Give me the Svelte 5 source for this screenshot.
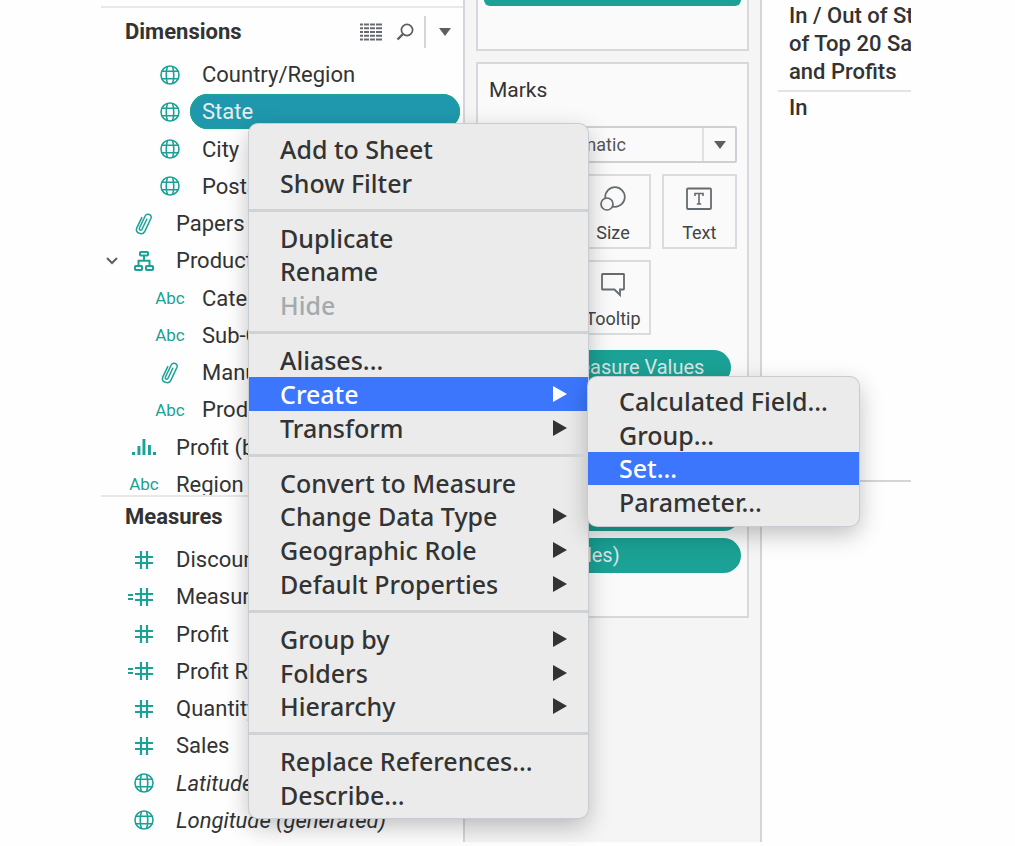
<script>
  const dimensions = [
    { icon: 'globe', label: 'Country/Region', nested: true },
    { icon: 'globe', label: 'State', nested: true, selected: true },
    { icon: 'globe', label: 'City', nested: true },
    { icon: 'globe', label: 'Postal Code', nested: true },
    { icon: 'clip', label: 'Papers' },
    { icon: 'tree', label: 'Product', open: true },
    { icon: 'abc', label: 'Category', nested: true },
    { icon: 'abc', label: 'Sub-Category', nested: true },
    { icon: 'clip', label: 'Manufacturer', nested: true },
    { icon: 'abc', label: 'Product Name', nested: true },
    { icon: 'bars', label: 'Profit (bin)' },
    { icon: 'abc', label: 'Region' }
  ];
  const measures = [
    { icon: 'hash', label: 'Discount' },
    { icon: 'calc', label: 'Measure Count' },
    { icon: 'hash', label: 'Profit' },
    { icon: 'calc', label: 'Profit Ratio' },
    { icon: 'hash', label: 'Quantity' },
    { icon: 'hash', label: 'Sales' },
    { icon: 'globe', label: 'Latitude (generated)', generated: true },
    { icon: 'globe', label: 'Longitude (generated)', generated: true }
  ];
  const createItems = ['Calculated Field...', 'Group...', 'Set...', 'Parameter...'];
  const menu = [
    { label: 'Add to Sheet' },
    { label: 'Show Filter' },
    null,
    { label: 'Duplicate' },
    { label: 'Rename' },
    { label: 'Hide', disabled: true },
    null,
    { label: 'Aliases...' },
    { label: 'Create', more: true, children: createItems },
    { label: 'Transform', more: true },
    null,
    { label: 'Convert to Measure' },
    { label: 'Change Data Type', more: true },
    { label: 'Geographic Role', more: true },
    { label: 'Default Properties', more: true },
    null,
    { label: 'Group by', more: true },
    { label: 'Folders', more: true },
    { label: 'Hierarchy', more: true },
    null,
    { label: 'Replace References...' },
    { label: 'Describe...' }
  ];
  let active = $state('Create');
  let activeChild = $state('Set...');
</script>

{#snippet fieldIcon(name)}
  {#if name === 'globe'}
    <svg width="20" height="20" viewBox="0 0 20 20" fill="none" stroke="currentColor" stroke-width="1.6">
      <circle cx="10" cy="10" r="9" />
      <path d="M7.500 1.500C5.800 6 5.800 14 7.500 18.500M12.500 1.500c1.700 4.500 1.700 12.500 0 17M1.600 6.300h16.800M1.600 13.700h16.800" />
    </svg>
  {:else if name === 'clip'}
    <svg width="20" height="24" viewBox="0 0 20 24" fill="none" stroke="currentColor" stroke-width="1.500" stroke-linecap="round">
      <path d="M12.8 7.2 8 17.2c-.9 1.8-3.4.8-2.6-1.2L11.200 4c1.500-3.100 7.300-1.500 5.800 2.300L10.800 19.400c-2 4.300-10 1.800-8.200-3L7.800 5.600" />
    </svg>
  {:else if name === 'tree'}
    <svg width="20" height="20" viewBox="0 0 20 20" fill="none" stroke="currentColor" stroke-width="2">
      <rect x="6" y="1" width="8" height="3.600" rx=".8" />
      <rect x="1" y="15" width="7" height="4" rx=".8" />
      <rect x="12" y="15" width="7" height="4" rx=".8" />
      <path d="M10 5v4.500M4.500 15V9.800h11V15" />
    </svg>
  {:else if name === 'bars'}
    <svg width="26" height="18" viewBox="0 0 26 18" fill="currentColor">
      <path d="M1 14h3v3H1zM6.500 8h2.900v9H6.500zM11.500 1h2.900v16h-2.900zM17 7h2.900v10H17zM22 14h3v3h-3z" />
    </svg>
  {:else if name === 'hash'}
    <svg width="34" height="20" viewBox="0 0 34 20" fill="none" stroke="currentColor" stroke-width="2.200">
      <path d="M14 1v18M20 1v18M8 7h18M8 13h18" />
    </svg>
  {:else if name === 'calc'}
    <svg width="34" height="20" viewBox="0 0 34 20" fill="none" stroke="currentColor" stroke-width="2.200">
      <path d="M14 1v18M20 1v18M8 7h18M8 13h18M1 8h5M1 12h5" />
    </svg>
  {:else}
    <span class="abc">Abc</span>
  {/if}
{/snippet}

{#snippet field(f)}
  <li class="field" class:nested={f.nested} class:selected={f.selected} class:generated={f.generated}>
    {#if f.open}
      <svg class="chevron" width="12" height="8" viewBox="0 0 12 8" fill="none" stroke="#5b6066" stroke-width="2"><path d="M1 1l5 5 5-5" /></svg>
    {/if}
    <span class="icon">{@render fieldIcon(f.icon)}</span>
    <button class="name">{f.label}</button>
  </li>
{/snippet}

{#snippet down()}
  <svg width="14" height="8" viewBox="0 0 14 8" fill="#5b5f63"><path d="M1 0h12L7 8z" /></svg>
{/snippet}

<main class="workspace">
  <aside class="data">
    <section class="dimensions">
      <header>
        <h2>Dimensions</h2>
        <button class="tool" aria-label="View data">
          <svg width="24" height="18" viewBox="0 0 24 18" stroke="#666a6e" stroke-width="2" fill="none">
            <path d="M1 1.500h3M5 1.500h5M11 1.500h5M17 1.500h6M1 5.250h3M5 5.250h5M11 5.250h5M17 5.250h6M1 9h3M5 9h5M11 9h5M17 9h6M1 12.750h3M5 12.750h5M11 12.750h5M17 12.750h6M1 16.500h3M5 16.500h5M11 16.500h5M17 16.500h6" />
          </svg>
        </button>
        <button class="tool" aria-label="Find field">
          <svg width="18" height="18" viewBox="0 0 18 18" stroke="#5b5f63" fill="none">
            <circle cx="11" cy="7" r="5.600" stroke-width="1.700" /><path d="M7 11l-5.500 5.500" stroke-width="2.400" />
          </svg>
        </button>
        <button class="tool split" aria-label="Options">{@render down()}</button>
      </header>
      <ul class="fields">
        {#each dimensions as f}{@render field(f)}{/each}
      </ul>
    </section>
    <section class="measures">
      <header><h2>Measures</h2></header>
      <ul class="fields">
        {#each measures as f}{@render field(f)}{/each}
      </ul>
    </section>
  </aside>

  <section class="shelves">
    <div class="card filters"><span class="pill"></span></div>
    <div class="card marks">
      <h3>Marks</h3>
      <button class="type"><span>Automatic</span><i>{@render down()}</i></button>
      <div class="channels">
        <button class="size">
          <svg width="26" height="26" viewBox="0 0 26 26" fill="#fafafa" stroke="#666b70" stroke-width="1.700">
            <circle cx="15" cy="11" r="9.800" /><circle cx="7" cy="18" r="6" />
          </svg>
          Size
        </button>
        <button>
          <svg width="26" height="26" viewBox="0 0 26 26" fill="none" stroke="#666b70" stroke-width="1.800">
            <rect x="1" y="2.500" width="24" height="20.500" rx="1" />
            <path d="M9 10V7.500h8V10M13 7.500V18M10.800 18h4.400" stroke-width="1.600" />
          </svg>
          Text
        </button>
        <button class="tip">
          <svg width="26" height="26" viewBox="0 0 26 26" fill="none" stroke="#666b70" stroke-width="1.800">
            <path d="M2.500 2h21q.5 0 .5.500v14.500q0 .5-.5.500H20v5.500L14.500 17.500h-12q-.5 0-.5-.5V2.500q0-.5.5-.5z" />
          </svg>
          Tooltip
        </button>
      </div>
      <div class="pill values">Measure Values</div>
      <div class="pills">
        <div class="pill"></div>
        <div class="pill">SUM(Sales)</div>
      </div>
    </div>
  </section>

  <section class="view">
    <h3>In / Out of States<br />of Top 20 Sales<br />and Profits</h3>
    <p>In</p>
  </section>

  <ul class="menu main">
    {#each menu as m}
      {#if m}
        <li class:active={m.label === active}>
          <button disabled={m.disabled} onmouseenter={() => (active = m.label)}>
            {m.label}
            {#if m.more}<svg width="14" height="16" viewBox="0 0 14 16" fill="currentColor"><path d="M0 0l14 8-14 8z" /></svg>{/if}
          </button>
          {#if m.children && m.label === active}
            <ul class="menu sub">
              {#each m.children as c}
                <li class:active={c === activeChild}><button onmouseenter={() => (activeChild = c)}>{c}</button></li>
              {/each}
            </ul>
          {/if}
        </li>
      {:else}
        <li class="rule" role="separator"></li>
      {/if}
    {/each}
  </ul>
</main>

<style>
  :global(body) {
    margin: 0;
    background: #fefefe;
    font-family: Roboto, 'Liberation Sans', sans-serif;
    color: #333;
  }
  ul { list-style: none; margin: 0; padding: 0; }
  h2, h3, p { margin: 0; }
  button { font: inherit; color: inherit; background: none; border: 0; padding: 0; }
  svg { display: block; flex: none; }

  .workspace {
    position: relative;
    display: grid;
    grid-template-columns: 364px 297px 1fr;
    margin: 0 104px 4px 101px;
  }

  .data { border-right: 2px solid #d3d6d9; padding-top: 6px; }
  .dimensions { height: 487px; overflow: hidden; border-top: 2px solid #e8e8e8; }
  .measures { border-top: 2px solid #e8e8e8; padding-bottom: 3px; }
  header { display: flex; align-items: center; height: 48px; padding: 0 11px 0 24px; }
  .measures header { height: 40px; padding-bottom: 4px; }
  h2 { flex: 1; font-size: 22px; line-height: 28px; font-weight: 700; }
  .tool { display: flex; align-items: center; height: 32px; margin-left: 13px; }
  .split { border-left: 2px solid #d3d6d9; padding-left: 12px; margin-left: 10px; }

  .fields { display: grid; grid-auto-rows: 1fr; height: 447px; }
  .measures .fields { height: 298px; }
  .field { position: relative; display: flex; align-items: center; padding-left: 23px; font-size: 22px; white-space: nowrap; }
  .nested { padding-left: 49px; }
  .icon { display: flex; justify-content: center; width: 40px; color: #1ba195; }
  .abc { font-size: 17px; }
  .name { flex: 1; margin-left: 3px; padding: 0 9px; line-height: 35px; text-align: left; }
  .nested .name { margin-left: 0; padding-left: 12px; margin-right: 3px; }
  .selected .name { background: #1f98ae; box-shadow: inset 0 0 0 2px #1ba195; color: #e8eef0; border-radius: 18px; }
  .generated .name { font-style: italic; }
  .chevron { position: absolute; left: 5px; }

  .shelves { background: #f5f5f5; border-right: 2px solid #d3d6d9; padding: 0 11px; font-size: 20px; }
  .card { background: #fafafa; border: 2px solid #d6d9db; }
  .filters { height: 49px; border-top: 0; padding: 0 6px; margin-bottom: 11px; }
  .pill { display: block; height: 35px; line-height: 35px; border-radius: 18px; background: #1ba195; color: #d9e6e5; }
  .filters .pill { height: 6px; border-radius: 0 0 18px 18px; }
  .marks { height: 552px; padding: 0 10px 0 11px; }
  .marks h3 { font-size: 21px; font-weight: 400; line-height: 28px; padding-top: 12px; }
  .type { display: flex; width: 100%; height: 37px; margin: 22px 0 11px; border: 2px solid #cdd1d4; border-radius: 2px; font-size: 18px; color: #555; }
  .type span { flex: 1; line-height: 33px; padding-left: 52px; text-align: left; }
  .type i { display: flex; align-items: center; justify-content: center; width: 31px; border-left: 2px solid #dfe1e3; }
  .channels { display: grid; grid-template-columns: repeat(3, 1fr); gap: 11px; font-size: 18px; color: #444; }
  .channels button { display: flex; flex-direction: column; align-items: center; justify-content: space-between; height: 75px; padding: 10px 0 2px; border: 2px solid #d9dbdd; line-height: 24px; }
  .channels .size, .channels .tip { grid-column: 2; }
  .values { margin: 15px 6px 0 0; padding-left: 73px; }
  .pills { display: grid; gap: 7px; margin: 111px -4px 0 0; }
  .pills .pill { padding-left: 26px; }

  .view { overflow: hidden; padding-left: 16px; white-space: nowrap; font-size: 22px; }
  .view h3 { font-size: 22px; line-height: 28px; font-weight: 500; padding: 2px 0 4px 11px; border-bottom: 2px solid #e4e4e4; }
  .view p { height: 388px; line-height: 32px; font-weight: 500; padding-left: 11px; border-bottom: 2px solid #d3d6d9; }

  .menu {
    position: absolute;
    display: flex;
    flex-direction: column;
    box-sizing: border-box;
    padding: 8px 0 6px;
    background: #ebebeb;
    border-radius: 9px;
    box-shadow: 0 0 0 1px #c8ccd0, 0 8px 24px rgba(0, 0, 0, .26);
    font-family: 'Noto Sans', sans-serif;
    font-size: 25px;
    font-weight: 500;
    color: #333;
  }
  .main { left: 148px; top: 124px; width: 339px; height: 694px; }
  .menu li { position: relative; flex: 27 1 0; display: flex; }
  .menu li > button { flex: 1; display: flex; align-items: center; justify-content: space-between; padding: 0 21px 0 31px; line-height: 32px; white-space: nowrap; }
  .menu .active { background: #3b76fc; }
  .menu .active > button { color: #fff; }
  .menu button:disabled { color: #a3aaae; }
  .menu .rule { flex: 17 1 0; align-items: center; }
  .rule::before { content: ''; flex: 1; height: 3px; background: #d0d3d6; }
  .menu.sub { left: 100%; top: 0; width: 271px; height: 149px; padding: 7px 0; }
</style>
